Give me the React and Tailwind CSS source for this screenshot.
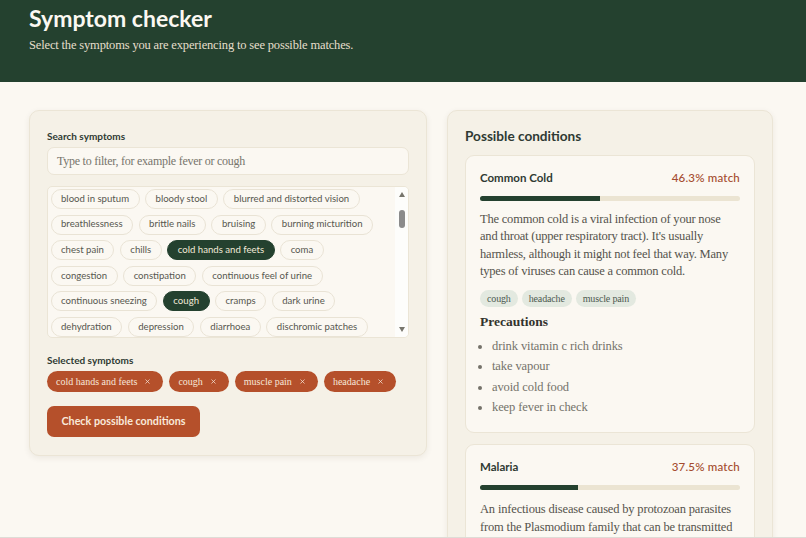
import React from 'react';
import { X } from 'lucide-react';

const sans = 'font-["Lato",sans-serif]';
const serif = 'font-["Liberation_Serif",serif]';

const symptoms = [
  'blood in sputum', 'bloody stool', 'blurred and distorted vision',
  'breathlessness', 'brittle nails', 'bruising', 'burning micturition',
  'chest pain', 'chills', 'cold hands and feets', 'coma',
  'congestion', 'constipation', 'continuous feel of urine',
  'continuous sneezing', 'cough', 'cramps', 'dark urine',
  'dehydration', 'depression', 'diarrhoea', 'dischromic patches',
];
const active = ['cold hands and feets', 'cough'];
const selected = ['cold hands and feets', 'cough', 'muscle pain', 'headache'];

function Chip({ label }) {
  const on = active.includes(label);
  return (
    <span
      className={`h-[20px] flex items-center rounded-full border px-[9.5px] text-[9.6px] ${
        on ? 'bg-[#24412f] border-[#24412f] text-[#f3ead8]' : 'bg-[#fbf8f2] border-[#e9e3d5] text-[#57574f]'
      }`}
    >
      {label}
    </span>
  );
}

function ConditionHead({ name, match, width }) {
  return (
    <>
      <div className={`flex justify-between items-center text-[11.5px] leading-[14px] ${sans}`}>
        <span className="font-bold text-[#2f3a33]">{name}</span>
        <span className="font-medium tracking-[0.2px] text-[#a44b2d]">{match}</span>
      </div>
      <div className="mt-[11px] h-[5px] rounded-full bg-[#ebe4d2] overflow-hidden">
        <div className="h-full bg-[#24412f]" style={{ width }} />
      </div>
    </>
  );
}

export default function App() {
  return (
    <div className="h-[538px] overflow-hidden bg-[#fbf8f2] border-b border-[#dedcd6]">
      <header className="h-[82px] bg-[#24412f] px-[29px] pt-[4px]">
        <h1 className={`text-[23px] leading-[28px] font-bold text-[#fbf8f2] ${sans}`}>Symptom checker</h1>
        <p className={`mt-[4px] text-[12.5px] tracking-[-0.16px] text-[#e6dfcc] ${serif}`}>
          Select the symptoms you are experiencing to see possible matches.
        </p>
      </header>

      <main className="flex items-start gap-[20px] pl-[29px] pr-[33px] pt-[28px]">
        <section className="w-[398px] shrink-0 rounded-[10px] border border-[#ebe5d6] bg-[#f5f1e7] px-[17px] pt-[18px] pb-[18px] shadow-[0_2px_6px_rgba(60,50,30,0.08)]">
          <label className={`block text-[10px] leading-[14px] font-bold text-[#2f3a33] ${sans}`}>Search symptoms</label>
          <div className={`mt-[4px] h-[28px] flex items-center rounded-[7px] border border-[#ebe5d6] bg-[#fbf8f2] px-[9px] text-[12px] tracking-[-0.25px] text-[#77756c] ${serif}`}>
            Type to filter, for example fever or cough
          </div>

          <div className="mt-[11px] h-[152px] flex rounded-[5px] border border-[#ebe5d6] bg-[#fbf8f2] overflow-hidden">
            <div className={`flex-1 flex flex-wrap content-start gap-x-[5.5px] gap-y-[5.6px] pl-[2.5px] pr-[4px] pt-[2px] ${sans}`}>
              {symptoms.map((s) => <Chip key={s} label={s} />)}
            </div>
            <div className="w-[13px] flex flex-col items-center pt-[5px] pb-[5px] bg-[#fdfdfb]">
              <span className="w-0 h-0 border-x-[3.5px] border-x-transparent border-b-[5px] border-b-[#77756c]" />
              <span className="mt-[13px] w-[6px] h-[18px] rounded-full bg-[#8b8b8b]" />
              <span className="mt-auto w-0 h-0 border-x-[3.5px] border-x-transparent border-t-[5px] border-t-[#77756c]" />
            </div>
          </div>

          <h3 className={`mt-[15px] text-[10px] leading-[14px] font-bold text-[#2f3a33] ${sans}`}>Selected symptoms</h3>
          <div className={`mt-[4px] flex gap-[6px] ${serif}`}>
            {selected.map((s) => (
              <span key={s} className="h-[21px] flex items-center gap-[7px] rounded-full bg-[#b5502b] pl-[9px] pr-[12px] text-[10px] text-[#f6e6d8]">
                {s}
                <X className="w-[7px] h-[7px]" strokeWidth={2.5} />
              </span>
            ))}
          </div>
          <button className={`mt-[14px] h-[31px] w-[153px] rounded-[7px] bg-[#b5502b] text-[10.75px] font-bold text-[#f9e9da] ${sans}`}>
            Check possible conditions
          </button>
        </section>

        <section className="flex-1 rounded-[10px] border border-[#ebe5d6] bg-[#f5f1e7] px-[17px] pt-[16px] shadow-[0_2px_6px_rgba(60,50,30,0.08)]">
          <h2 className={`text-[13.6px] leading-[18px] font-bold text-[#2f3a33] ${sans}`}>Possible conditions</h2>

          <article className="mt-[10px] rounded-[9px] border border-[#ebe5d6] bg-[#fbf8f2] px-[14px] pt-[15px] pb-[15px]">
            <ConditionHead name="Common Cold" match="46.3% match" width="46.3%" />
            <p className={`mt-[10px] text-[12.5px] tracking-[-0.2px] leading-[17.3px] text-[#55534c] ${serif}`}>
              The common cold is a viral infection of your nose and throat (upper respiratory tract). It's usually harmless, although it might not feel that way. Many types of viruses can cause a common cold.
            </p>
            <div className={`mt-[10px] flex gap-[4px] text-[10px] tracking-[-0.15px] text-[#4d5a50] ${serif}`}>
              {['cough', 'headache', 'muscle pain'].map((t) => (
                <span key={t} className="h-[17px] flex items-center rounded-full bg-[#e3e9e0] px-[7px]">{t}</span>
              ))}
            </div>
            <h4 className={`mt-[6px] text-[13.5px] leading-[18px] font-bold text-[#33332e] ${serif}`}>Precautions</h4>
            <ul className={`mt-[5px] list-disc pl-[12px] text-[12.5px] tracking-[-0.1px] text-[#74726a] ${serif}`}>
              {['drink vitamin c rich drinks', 'take vapour', 'avoid cold food', 'keep fever in check'].map((p) => (
                <li key={p} className="h-[20.2px] leading-[20px]">{p}</li>
              ))}
            </ul>
          </article>

          <article className="mt-[11px] rounded-[9px] border border-[#ebe5d6] bg-[#fbf8f2] px-[14px] pt-[15px] pb-[15px]">
            <ConditionHead name="Malaria" match="37.5% match" width="37.5%" />
            <p className={`mt-[11.5px] text-[12.5px] tracking-[-0.17px] leading-[17.3px] text-[#55534c] ${serif}`}>
              An infectious disease caused by protozoan parasites from the Plasmodium family that can be transmitted by the bite of an infected Anopheles mosquito.
            </p>
          </article>
        </section>
      </main>
    </div>
  );
}
